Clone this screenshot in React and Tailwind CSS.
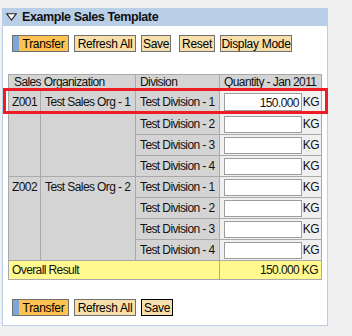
import React from "react";

const ORGS = [
  { code: "Z001", name: "Test Sales Org - 1", values: ["150.000", "", "", ""] },
  { code: "Z002", name: "Test Sales Org - 2", values: ["", "", "", ""] },
];

function Btn({ children, primary, focused, w }) {
  return (
    <button
      className={`flex h-[17px] items-stretch whitespace-nowrap border text-[12px] leading-none tracking-[-0.3px] text-black ${
        focused ? "border-black" : "border-[#707070]"
      } ${primary ? "bg-[#ffc24f]" : "bg-[#f6dfaa]"} ${w}`}
    >
      {primary && <span className="w-[6px] shrink-0 bg-[#7ea6d8]" />}
      <span className="flex flex-1 items-center justify-center">{children}</span>
    </button>
  );
}

function QtyCell({ value, first }) {
  return (
    <td className="border border-[#a9a9a9] bg-[#f0f0f0] pl-[4px] pr-[2px]">
      <div className="flex items-center">
        <div
          className={`w-[79px] border border-[#9c9c9c] bg-white pr-[2px] text-right leading-none ${
            first ? "h-[18px] pt-[3px]" : "h-[17px]"
          }`}
        >
          {value}
        </div>
        <span className="ml-[1px]">KG</span>
      </div>
    </td>
  );
}

export default function App() {
  return (
    <div
      className="h-[336px] w-[352px] overflow-hidden bg-[#f0f0f0] pl-[2px] pt-[8px] text-[12px] tracking-[-0.6px] text-[#111]"
      style={{ fontFamily: '"Liberation Sans", Arial, sans-serif' }}
    >
      <div className="relative flex h-[318px] w-[326px] flex-col border border-t-0 border-[#b9cfe7] bg-white">
        {/* HEADER */}
        <div className="-mx-px flex h-[18px] w-[326px] items-center gap-[5px] bg-[#b9cfe7] pl-[4px]">
          <svg width="11" height="8" viewBox="0 0 11 8">
            <path d="M0.8 0.8 L10.2 0.8 L5.5 7 Z" fill="white" stroke="#222" strokeWidth="1.1" />
          </svg>
          <span className="whitespace-nowrap text-[12.5px] font-bold tracking-[-0.4px]">Example Sales Template</span>
        </div>

        {/* TOOLBAR */}
        <div className="mt-[9px] flex gap-[5px] pl-[9px]">
          <Btn primary w="w-[57px]">Transfer</Btn>
          <Btn w="w-[62px]">Refresh All</Btn>
          <Btn w="w-[30px]">Save</Btn>
          <Btn w="ml-[3px] w-[36px]">Reset</Btn>
          <Btn w="w-[72px]">Display Mode</Btn>
        </div>

        {/* TABLE */}
        <table className="ml-[5px] mt-[22px] w-[313px] table-fixed border-collapse whitespace-nowrap">
          <colgroup>
            <col className="w-[32px]" />
            <col className="w-[95px]" />
            <col className="w-[84px]" />
            <col className="w-[102px]" />
          </colgroup>
          <thead>
            <tr className="h-[15px] bg-[#d4d4d4] text-left">
              <th colSpan={2} className="border border-[#a9a9a9] pl-[5px] font-normal leading-none">
                Sales Organization
              </th>
              <th className="border border-[#a9a9a9] pl-[4px] font-normal leading-none">Division</th>
              <th className="border border-[#a9a9a9] pl-[4px] font-normal leading-none">Quantity - Jan 2011</th>
            </tr>
          </thead>
          <tbody>
            {ORGS.map((org, oi) =>
              org.values.map((v, i) => {
                const first = oi === 0 && i === 0;
                return (
                  <tr key={`${org.code}-${i}`} className={first ? "h-[24px]" : "h-[21px]"}>
                    {i === 0 && (
                      <>
                        <td rowSpan={4} className="border border-[#a9a9a9] bg-[#d4d4d4] pl-[3px] align-top leading-[21px]">
                          <div className={first ? "pt-[2px]" : ""}>{org.code}</div>
                        </td>
                        <td rowSpan={4} className="border border-[#a9a9a9] bg-[#d4d4d4] pl-[4px] align-top leading-[21px]">
                          <div className={first ? "pt-[2px]" : ""}>{org.name}</div>
                        </td>
                      </>
                    )}
                    <td className="border border-[#a9a9a9] bg-[#d4d4d4] pl-[4px]">Test Division - {i + 1}</td>
                    <QtyCell value={v} first={first} />
                  </tr>
                );
              })
            )}
            <tr className="h-[17px] bg-[#fff98f]">
              <td colSpan={3} className="border border-[#a9a9a9] pl-[3px]">Overall Result</td>
              <td className="border border-[#a9a9a9] pr-[3px] text-right">150.000 KG</td>
            </tr>
          </tbody>
        </table>

        {/* FOOTER TOOLBAR */}
        <div className="mt-[19px] flex gap-[5px] pl-[9px]">
          <Btn primary w="w-[57px]">Transfer</Btn>
          <Btn w="w-[62px]">Refresh All</Btn>
          <Btn focused w="w-[32px]">Save</Btn>
        </div>

        {/* highlight box */}
        <div className="pointer-events-none absolute left-0 top-[80px] h-[26px] w-[325px] border-[3px] border-[#ee1c25]" />
      </div>
    </div>
  );
}
